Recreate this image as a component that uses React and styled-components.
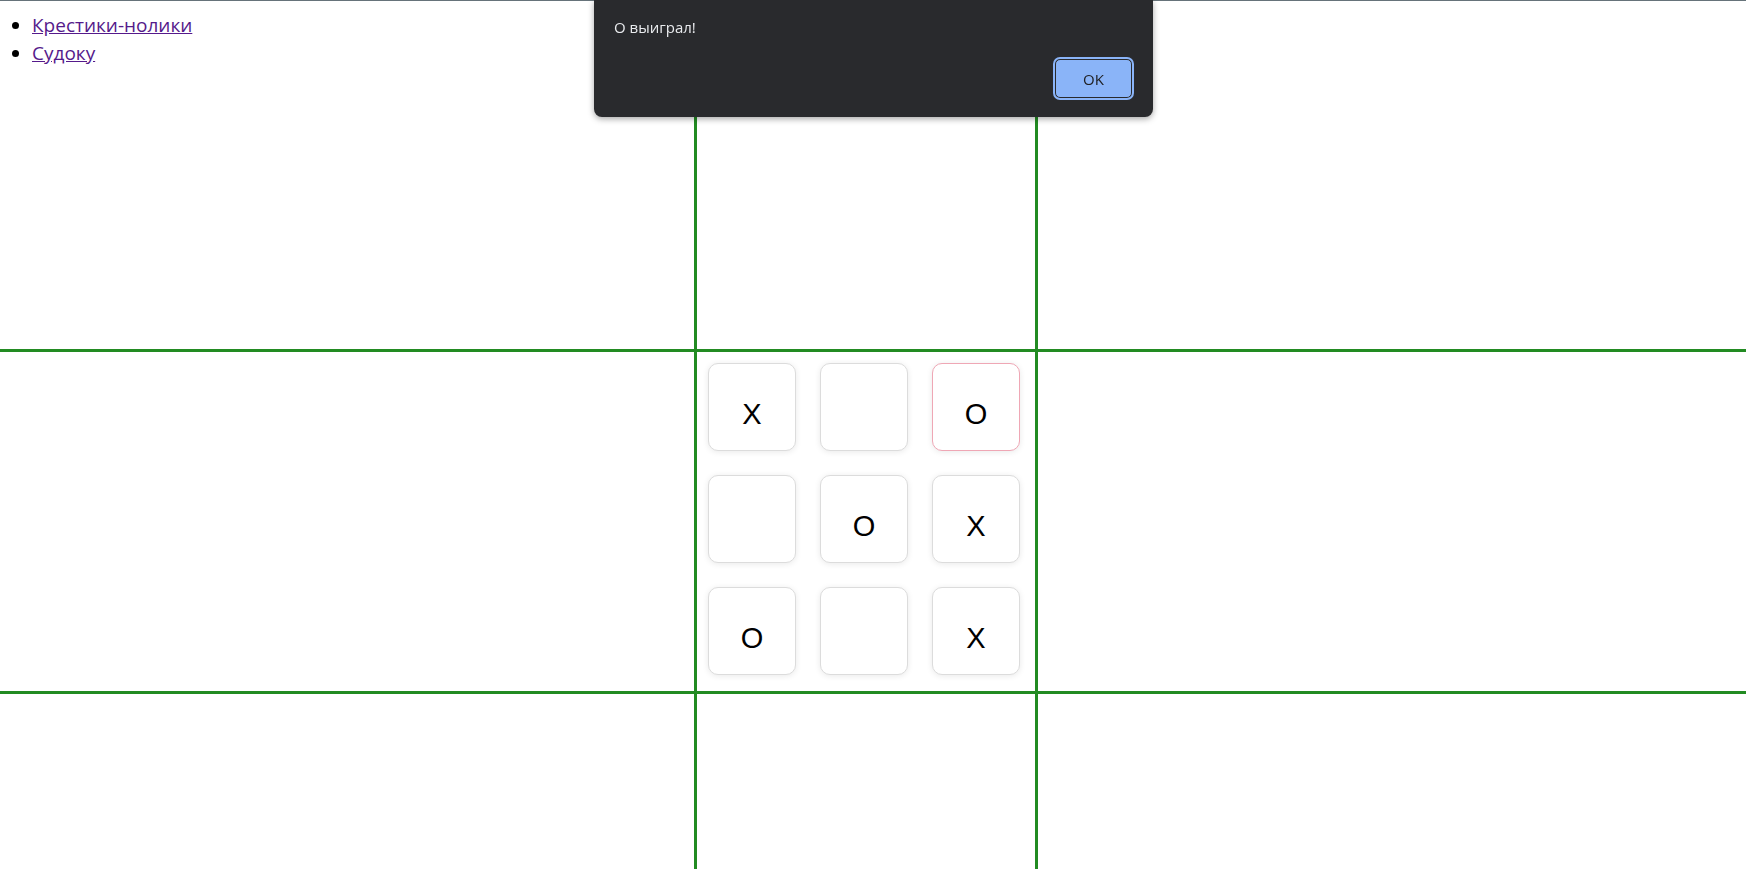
import React from 'react';
import styled, { createGlobalStyle } from 'styled-components';

const GlobalStyle = createGlobalStyle`
  html, body {
    margin: 0;
    padding: 0;
    background: #fff;
  }
  body {
    border-top: 1px solid #66737a;
    font-family: "Open Sans", "Liberation Sans", Arial, sans-serif;
    overflow: hidden;
  }
`;

const Page = styled.div`
  display: grid;
  grid-template-columns: 694px 344px 1fr;
  grid-template-rows: 348px 345px 1fr;
  height: calc(100vh - 1px);
`;

const Area = styled.div`
  box-sizing: border-box;
  border-color: #228b22;
  border-style: solid;
  border-width: ${p => (p.$row === 1 ? '3px' : '0')} ${p => (p.$col === 1 ? '3px' : '0')};
  min-width: 0;
`;

const Menu = styled.ul`
  margin: 10px 0 0;
  padding-left: 32px;
  font-family: "Open Sans", "Liberation Sans", Arial, sans-serif;
  font-size: 19px;
  line-height: 28px;

  a {
    color: #551a8b;
  }
`;

const Board = styled.div`
  display: grid;
  grid-template-columns: repeat(3, 88px);
  grid-auto-rows: 88px;
  gap: 24px;
  padding: 11px 11px;
`;

const Cell = styled.button`
  box-sizing: border-box;
  display: flex;
  align-items: center;
  justify-content: center;
  padding: 14px 0 0;
  background: #fff;
  border: 1px solid ${p => (p.$win ? '#efa7b5' : '#dcdcdc')};
  border-radius: 10px;
  box-shadow: 0 1px 6px rgba(0, 0, 0, 0.09);
  font-family: "Liberation Sans", Arial, sans-serif;
  font-size: 29px;
  color: #000;
  cursor: pointer;
`;

const Dialog = styled.div`
  position: fixed;
  left: 594px;
  top: 0;
  width: 559px;
  height: 117px;
  box-sizing: border-box;
  background: #292a2d;
  border-radius: 0 0 8px 8px;
  box-shadow: 0 2px 6px rgba(0, 0, 0, 0.35);
  padding: 17px 19px 17px 20px;
  display: flex;
  flex-direction: column;
  justify-content: space-between;
  font-family: "Open Sans", "Liberation Sans", Arial, sans-serif;
`;

const Message = styled.div`
  color: #e8eaed;
  font-size: 15px;
  line-height: 20px;
`;

const Actions = styled.div`
  display: flex;
  justify-content: flex-end;
`;

const OkButton = styled.button`
  width: 77px;
  height: 39px;
  margin: 2px;
  background: #8ab4f8;
  color: #202124;
  border: 1px solid #292a2d;
  border-radius: 5px;
  outline: 2px solid #8ab4f8;
  outline-offset: 0;
  font-family: "Open Sans", "Liberation Sans", Arial, sans-serif;
  font-size: 15px;
  cursor: pointer;
`;

const board = ['X', '', 'O', '', 'O', 'X', 'O', '', 'X'];

export default function App() {
  return (
    <>
      <GlobalStyle />
      <Page>
        <Area $row={0} $col={0}>
          <Menu>
            <li><a href="#ttt">Крестики-нолики</a></li>
            <li><a href="#sudoku">Судоку</a></li>
          </Menu>
        </Area>
        <Area $row={0} $col={1} />
        <Area $row={0} $col={2} />
        <Area $row={1} $col={0} />
        <Area $row={1} $col={1}>
          <Board>
            {board.map((v, i) => (
              <Cell key={i} $win={i === 2}>{v}</Cell>
            ))}
          </Board>
        </Area>
        <Area $row={1} $col={2} />
        <Area $row={2} $col={0} />
        <Area $row={2} $col={1} />
        <Area $row={2} $col={2} />
      </Page>
      <Dialog>
        <Message>О выиграл!</Message>
        <Actions>
          <OkButton>OK</OkButton>
        </Actions>
      </Dialog>
    </>
  );
}
